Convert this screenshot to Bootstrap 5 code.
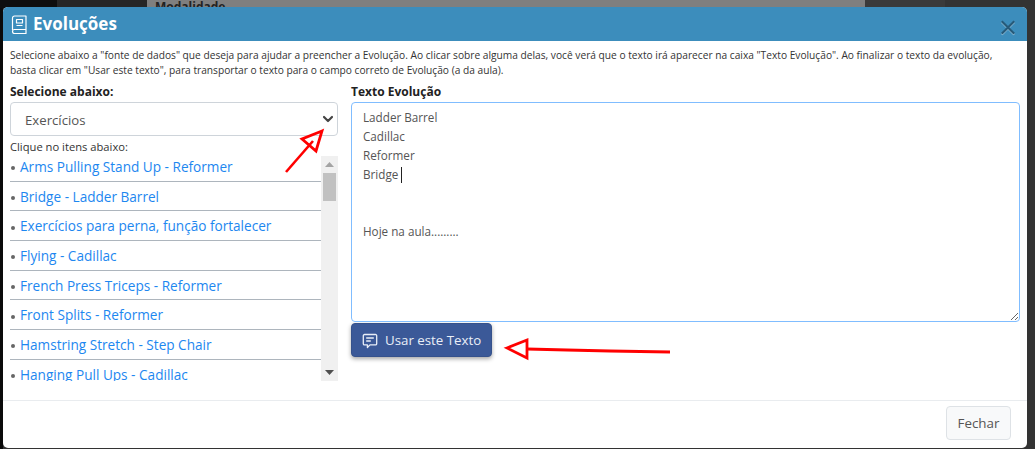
<!DOCTYPE html>
<html lang="pt-BR">
<head>
<meta charset="utf-8">
<title>Evoluções</title>
<link rel="stylesheet" href="https://cdn.jsdelivr.net/npm/bootstrap@5.3.0/dist/css/bootstrap.min.css">
<style>
html,body{height:449px;overflow:hidden;background:#333;}
body{font-family:"Open Sans","Liberation Sans",sans-serif;color:#333;}
.backdrop-strip{position:absolute;left:0;top:0;width:1035px;height:8px;display:flex;overflow:hidden;}
.seg-a{width:57px;background:#0e0e0e;}
.seg-b{width:90px;background:#262626;}
.seg-c{width:718px;background:#7f7f7f;font-size:12px;font-weight:700;color:#222;padding-left:8px;line-height:12px;padding-top:1px;}
.seg-d{width:80px;background:#3a3a3a;}
.seg-e{flex:1;background:#333;}
.page-shell{height:449px;padding:7px 8px 1px 3px;background:linear-gradient(90deg,#0a0a0a 0 3px,#333 3px);}
.evo-modal{position:relative;height:441px;border-radius:5px;border:0;overflow:hidden;background:#fff;}
.evo-head{height:34px;background:#3c8dbc;color:#fff;padding:0 11px 0 8px;}
.evo-title{font-size:17px;font-weight:700;margin:-2px 0 0 1px;line-height:1;}
.evo-close{background:none;border:0;padding:0;margin-top:13px;line-height:0;}
.evo-body{height:359px;padding:7px 7px 0 7px;}
.evo-intro{font-size:10.2px;line-height:15px;margin:0;color:#333;white-space:nowrap;height:30px;}
.left-col{width:328px;}
.right-col{width:669px;margin-left:13px;}
.evo-label{font-size:12px;font-weight:700;color:#222;line-height:16px;height:15px;margin:6px 0 0 0;display:block;}
.evo-select.form-select{height:34px;margin-top:3px;font-size:13.2px;color:#555;padding:3px 30px 0 14px;border-color:#ced4da;border-radius:4px;background-size:12px 9px;background-position:right 3px center;background-image:url("data:image/svg+xml,%3csvg xmlns='http://www.w3.org/2000/svg' viewBox='0 0 12 9'%3e%3cpath fill='none' stroke='%23444' stroke-width='2.2' stroke-linecap='round' stroke-linejoin='round' d='M2 2l4 4 4-4'/%3e%3c/svg%3e");}
.hint{font-size:11.2px;line-height:14px;margin:4px 0 0;color:#333;height:14px;}
.list-wrap{height:225px;margin-top:2px;overflow:hidden;}
.evo-list{flex:1;min-width:0;margin-top:-4px;}
.evo-item{height:29.67px;border-bottom:1px solid #adb5bd;font-size:13.6px;line-height:26.67px;padding-top:2px;white-space:nowrap;color:#666;}
.evo-item:last-child{border-bottom:0;}
.evo-item a{color:#1d87f0;text-decoration:none;}
.dot{display:inline-block;width:4px;height:4px;border-radius:50%;background:#666;vertical-align:middle;margin:0 5px 0 1px;}
.fake-scroll{width:17px;background:#f0f0f0;}
.scroll-thumb{height:28px;background:#c1c1c1;margin:0 1px 0 2px;width:13px;}
.scroll-arrow{height:17px;}
.scroll-spacer{flex:1;}
.evo-text.form-control{height:220px;margin-top:3px;font-size:11.7px;line-height:19px;padding:5px 11px;border-color:#80bdff;border-radius:4px;color:#555;box-shadow:none;}
.text-wrap{position:relative;}
.caret-mark{position:absolute;left:50px;top:65px;width:1px;height:16px;background:#222;}
.use-btn.btn{margin-top:1px;width:141px;height:34px;background:#3b5998;border:1px solid #36528c;color:#e9eef7;font-size:13.3px;border-radius:4px;padding:1px 0 0 10px;gap:7px;box-shadow:0 2px 4px rgba(0,0,0,.35);}
.evo-foot{height:48px;border-top:1px solid #e9ecef;padding:5px 16px 0 0;}
.close-btn.btn{width:65px;height:34px;background:#f8f9fa;border:1px solid #dee2e6;color:#555;font-size:13.4px;padding:0;border-radius:4px;}
.arrows{position:absolute;left:0;top:0;width:1035px;height:449px;pointer-events:none;}
</style>
</head>
<body>
<div class="backdrop-strip" aria-hidden="true">
  <div class="seg-a"></div><div class="seg-b"></div><div class="seg-c">Modalidade</div><div class="seg-d"></div><div class="seg-e"></div>
</div>
<div class="page-shell">
  <div class="evo-modal modal-content">
    <div class="evo-head d-flex align-items-start justify-content-between">
      <div class="d-flex align-items-center gap-1 h-100">
        <svg width="17" height="19" viewBox="0 0 17 19" fill="none" stroke="#fff" stroke-width="1.2" stroke-linejoin="round"><path d="M1.5 15V3a2 2 0 0 1 2-2h11.5v13.5H3.5a2 2 0 0 0 0 4H15v-4"/><path d="M5.5 4.5h6v3.5h-6zM5.5 10.5h6"/></svg>
        <h5 class="evo-title">Evoluções</h5>
      </div>
      <button type="button" class="evo-close" aria-label="Fechar">
        <svg width="16" height="16" viewBox="0 0 16 16" fill="none" stroke-linecap="square"><path d="M2.5 2.8l11 11M13.5 2.8l-11 11" stroke="#a6cbe0" stroke-width="2.2"/><path d="M2.5 2l11 11M13.5 2l-11 11" stroke="#265a7a" stroke-width="2.2"/></svg>
      </button>
    </div>
    <div class="evo-body">
      <p class="evo-intro">Selecione abaixo a "fonte de dados" que deseja para ajudar a preencher a Evolução. Ao clicar sobre alguma delas, você verá que o texto irá aparecer na caixa "Texto Evolução". Ao finalizar o texto da evolução,<br>basta clicar em "Usar este texto", para transportar o texto para o campo correto de Evolução (a da aula).</p>
      <div class="d-flex">
        <div class="left-col">
          <label class="evo-label" for="fonte">Selecione abaixo:</label>
          <select id="fonte" class="form-select evo-select"><option>Exercícios</option></select>
          <p class="hint">Clique no itens abaixo:</p>
          <div class="list-wrap d-flex">
            <div class="evo-list">
              <div class="evo-item"><span class="dot"></span><a href="#">Arms Pulling Stand Up - Reformer</a></div>
              <div class="evo-item"><span class="dot"></span><a href="#">Bridge - Ladder Barrel</a></div>
              <div class="evo-item"><span class="dot"></span><a href="#">Exercícios para perna, função fortalecer</a></div>
              <div class="evo-item"><span class="dot"></span><a href="#">Flying - Cadillac</a></div>
              <div class="evo-item"><span class="dot"></span><a href="#">French Press Triceps - Reformer</a></div>
              <div class="evo-item"><span class="dot"></span><a href="#">Front Splits - Reformer</a></div>
              <div class="evo-item"><span class="dot"></span><a href="#">Hamstring Stretch - Step Chair</a></div>
              <div class="evo-item"><span class="dot"></span><a href="#">Hanging Pull Ups - Cadillac</a></div>
            </div>
            <div class="fake-scroll d-flex flex-column">
              <div class="scroll-arrow d-flex align-items-center justify-content-center"><svg width="9" height="5" viewBox="0 0 9 5"><path d="M4.5 0L9 5H0z" fill="#a3a3a3"/></svg></div>
              <div class="scroll-thumb"></div>
              <div class="scroll-spacer"></div>
              <div class="scroll-arrow d-flex align-items-center justify-content-center"><svg width="9" height="5" viewBox="0 0 9 5"><path d="M4.5 5L9 0H0z" fill="#505050"/></svg></div>
            </div>
          </div>
        </div>
        <div class="right-col">
          <label class="evo-label" for="texto">Texto Evolução</label>
          <div class="text-wrap">
            <textarea id="texto" class="form-control evo-text">Ladder Barrel
Cadillac
Reformer
Bridge


Hoje na aula.........</textarea>
            <span class="caret-mark"></span>
          </div>
          <button type="button" class="btn use-btn d-inline-flex align-items-center justify-content-start">
            <svg width="16" height="16" viewBox="0 0 16 16" fill="none" stroke="#e9eef7" stroke-width="1.3" stroke-linejoin="round"><path d="M2.5 1.5h11a1.2 1.2 0 0 1 1.2 1.2v8a1.2 1.2 0 0 1-1.2 1.2H8l-2.6 2.6v-2.6H2.5a1.2 1.2 0 0 1-1.2-1.2v-8a1.2 1.2 0 0 1 1.2-1.2z"/><path d="M4.2 5h7.6M4.2 8h4.6"/></svg>
            <span>Usar este Texto</span>
          </button>
        </div>
      </div>
    </div>
    <div class="evo-foot d-flex justify-content-end align-items-start">
      <button type="button" class="btn close-btn">Fechar</button>
    </div>
  </div>
</div>
<svg class="arrows" viewBox="0 0 1035 449" fill="none" stroke="#f00" aria-hidden="true">
  <path d="M286 172L313 141" stroke-width="2.6"/>
  <path d="M322 131L302 139L316 151z" stroke-width="2.8"/>
  <path d="M507 348L527 340V358z" stroke-width="2.8"/>
  <path d="M527 349L567 350L610 351L670 352" stroke-width="2.8"/>
</svg>
</body>
</html>
